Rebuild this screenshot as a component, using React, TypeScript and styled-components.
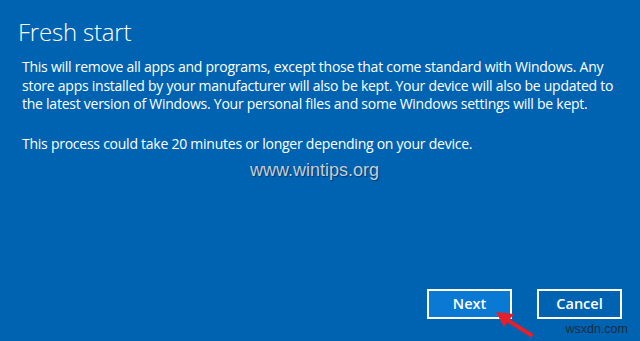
import React from "react";
import styled, { createGlobalStyle } from "styled-components";

const Global = createGlobalStyle`
  html, body { margin: 0; padding: 0; background: #0063b1; }
  #root { width: 640px; height: 341px; }
`;

const Screen = styled.div`
  position: relative;
  width: 640px;
  height: 341px;
  box-sizing: border-box;
  background: #0063b1;
  color: #ffffff;
  display: flex;
  flex-direction: column;
  overflow: hidden;
  font-family: "Open Sans", "Noto Sans", sans-serif;
`;

const Title = styled.h1`
  margin: 16px 0 0 18px;
  font-size: 24px;
  line-height: 32px;
  font-weight: 300;
  letter-spacing: -0.2px;
`;

const Paragraph = styled.p<{ $gap: number }>`
  margin: ${(p) => p.$gap}px 0 0 22px;
  font-size: 14px;
  line-height: 18.5px;
  font-weight: 400;
  letter-spacing: -0.25px;
  white-space: nowrap;
`;

const Watermark = styled.div`
  margin: 7px 0 0 250px;
  font-family: "Liberation Sans", Arial, sans-serif;
  font-size: 18px;
  line-height: 20px;
  color: #c6cdd6;
  text-shadow: 1px 1px 1px rgba(0, 20, 50, 0.55);
`;

const Footer = styled.div`
  margin-top: auto;
  padding: 0 18px 22px 0;
  display: flex;
  justify-content: flex-end;
  gap: 25px;
`;

const Button = styled.button<{ $primary?: boolean }>`
  width: 85px;
  height: 30px;
  box-sizing: border-box;
  border: 2px solid #ffffff;
  background: ${(p) => (p.$primary ? "#0a79d4" : "#0063b1")};
  color: #ffffff;
  font-family: "Open Sans", "Noto Sans", sans-serif;
  font-size: 14.5px;
  font-weight: 600;
  padding: 0;
  line-height: 26px;
`;

const Credit = styled.div`
  position: absolute;
  right: 12px;
  bottom: 5px;
  font-family: "Liberation Sans", Arial, sans-serif;
  font-size: 12.5px;
  color: #1b2b3e;
`;

const Pointer = styled.svg`
  position: absolute;
  left: 480px;
  top: 300px;
`;

export default function App() {
  return (
    <>
      <Global />
      <Screen>
        <Title>Fresh start</Title>
        <Paragraph $gap={10}>
          This will remove all apps and programs, except those that come standard with Windows. Any
          <br />
          store apps installed by your manufacturer will also be kept. Your device will also be updated to
          <br />
          the latest version of Windows. Your personal files and some Windows settings will be kept.
        </Paragraph>
        <Paragraph $gap={21}>This process could take 20 minutes or longer depending on your device.</Paragraph>
        <Watermark>www.wintips.org</Watermark>
        <Footer>
          <Button $primary>Next</Button>
          <Button>Cancel</Button>
        </Footer>
        <Credit>wsxdn.com</Credit>
        <Pointer width="60" height="41" viewBox="0 0 60 41">
          <line x1="51" y1="35" x2="26" y2="19" stroke="#e5202a" strokeWidth="4" strokeLinecap="round" />
          <polygon points="16,12 34,14 24,27" fill="#e5202a" />
        </Pointer>
      </Screen>
    </>
  );
}
